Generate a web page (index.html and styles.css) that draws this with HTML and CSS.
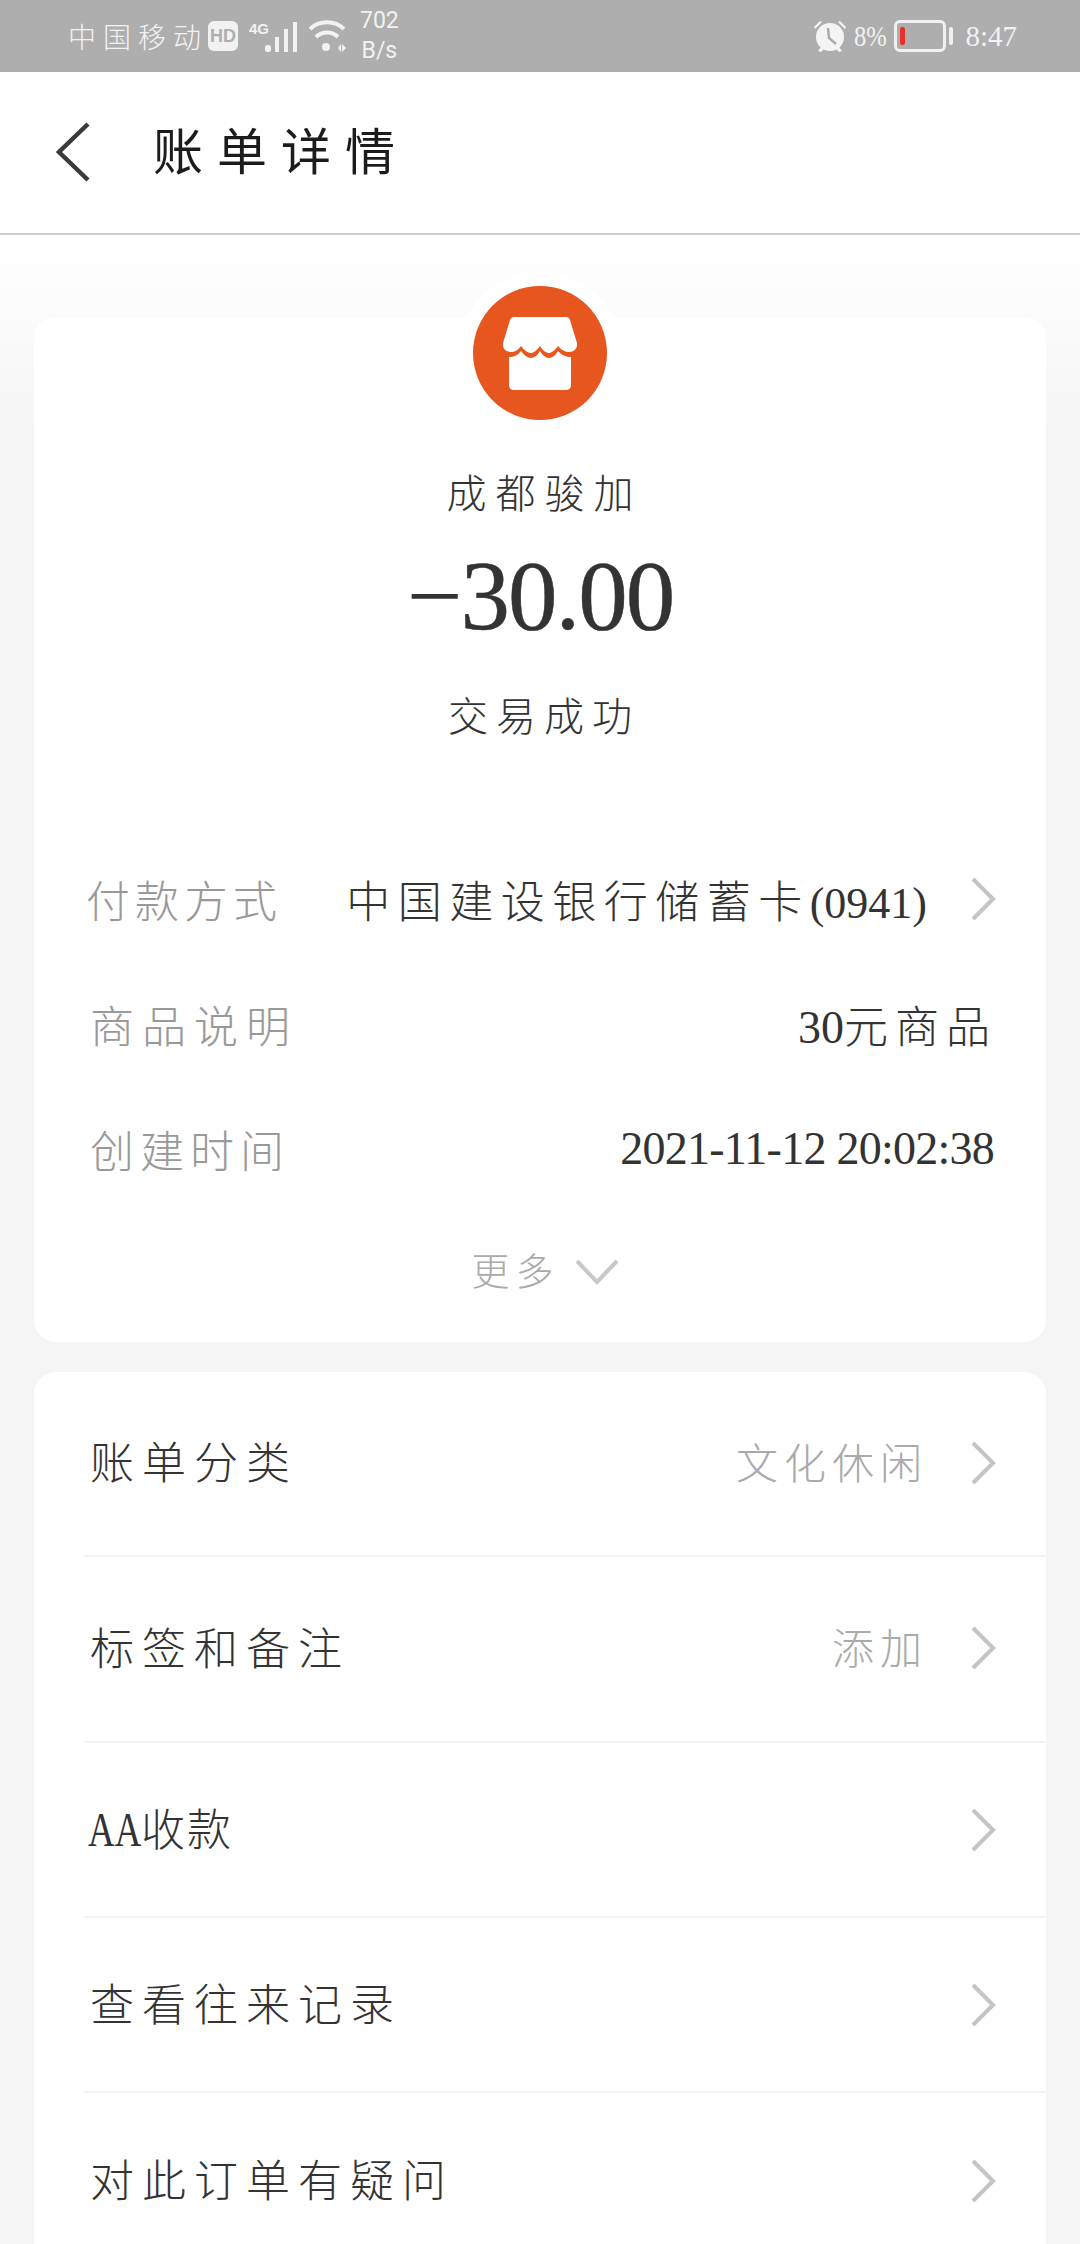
FILE: index.html
```html
<!DOCTYPE html>
<html lang="zh-CN">
<head>
<meta charset="utf-8">
<title>账单详情</title>
<link rel="stylesheet" href="styles.css">
</head>
<body>
<div class="status">
  <div class="status-left">
    <span class="carrier">中国移动</span>
    <span class="hd">HD</span>
    <span class="net">
      <span class="four-g">4G</span>
      <svg class="bars" width="33" height="32" viewBox="0 0 33 32"><g fill="#f2f2f2"><rect x="0" y="24" width="6" height="7" rx="2.5"/><rect x="10" y="16" width="4" height="15"/><rect x="19" y="8" width="4" height="23"/><rect x="28" y="1" width="4" height="30"/></g></svg>
    </span>
    <svg class="wifi" width="38" height="34" viewBox="0 0 38 34"><g fill="none" stroke="#f2f2f2" stroke-width="4"><path d="M2 10C11 1 27 1 36 10"/><path d="M8 18C14 12 24 12 30 18"/></g><circle cx="18" cy="28" r="4" fill="#f2f2f2"/><path d="M30 29l3-4v8zM34 25l4 4-4 4z" fill="#f2f2f2"/></svg>
    <span class="speed"><span>702</span><span>B/s</span></span>
  </div>
  <div class="status-right">
    <svg class="alarm" width="34" height="34" viewBox="0 0 34 34"><g fill="#f4f4f4"><circle cx="17" cy="18" r="14"/><path d="M1 8l6-6 2 1-7 7zM33 8l-6-6-2 1 7 7z"/><path d="M5 32l3-4 3 2-3 3zM29 32l-3-4-3 2 3 3z"/></g><path d="M15 9l1 10 7 6" fill="none" stroke="#aaa" stroke-width="2.5"/></svg>
    <span class="pct">8%</span>
    <span class="battery"><span class="level"></span></span>
    <span class="nub"></span>
    <span class="clock">8:47</span>
  </div>
</div>

<header class="topbar">
  <svg class="back" width="36" height="60" viewBox="0 0 36 60"><path d="M33 2L4 30l29 28" fill="none" stroke="#3a3a3a" stroke-width="4.5"/></svg>
  <h1 class="title">账单详情</h1>
</header>

<main class="content">
  <section class="card summary">
    <div class="avatar-ring">
      <div class="avatar">
        <svg width="74" height="73" viewBox="0 0 74 73"><path fill="#fff" d="M11 0H63Q66 0 67 3L74 26Q75 34 66 35Q60 35 55 29Q50 36 46 36Q41 36 37 29Q32 36 28 36Q23 36 18 29Q14 35 8 35Q-1 34 0 26L7 3Q8 0 11 0Z"/><path fill="#fff" d="M6 40Q14 40 18 34Q23 41 28 41Q33 41 37 34Q41 41 46 41Q51 41 55 34Q60 40 68 40V68Q68 73 63 73H11Q6 73 6 68Z"/></svg>
      </div>
    </div>
    <div class="merchant">成都骏加</div>
    <div class="amount"><span class="minus">−</span>30.00</div>
    <div class="state">交易成功</div>
    <div class="details">
      <div class="detail">
        <span class="label wide">付款方式</span>
        <span class="value pay">中国建设银行储蓄卡<span class="num">(0941)</span></span>
        <svg class="chev" width="26" height="44" viewBox="0 0 26 44"><path d="M3 2l20 20L3 42" fill="none" stroke="#c4c4c4" stroke-width="4"/></svg>
      </div>
      <div class="detail">
        <span class="label mid">商品说明</span>
        <span class="value desc"><span class="num">30</span>元商品</span>
      </div>
      <div class="detail">
        <span class="label">创建时间</span>
        <span class="value num date">2021-11-12 20:02:38</span>
      </div>
    </div>
    <div class="more">
      <span>更多</span>
      <svg width="44" height="28" viewBox="0 0 44 28"><path d="M2 3l20 21L42 3" fill="none" stroke="#c8c8c8" stroke-width="4"/></svg>
    </div>
  </section>

  <section class="card list">
    <div class="row first">
      <span class="row-name">账单分类</span>
      <span class="row-value">文化休闲</span>
      <svg class="chev" width="26" height="44" viewBox="0 0 26 44"><path d="M3 2l20 20L3 42" fill="none" stroke="#c4c4c4" stroke-width="4"/></svg>
    </div>
    <div class="row second">
      <span class="row-name">标签和备注</span>
      <span class="row-value">添加</span>
      <svg class="chev" width="26" height="44" viewBox="0 0 26 44"><path d="M3 2l20 20L3 42" fill="none" stroke="#c4c4c4" stroke-width="4"/></svg>
    </div>
    <div class="row">
      <span class="row-name aa"><span class="aa-mark">AA</span>收款</span>
      <svg class="chev" width="26" height="44" viewBox="0 0 26 44"><path d="M3 2l20 20L3 42" fill="none" stroke="#c4c4c4" stroke-width="4"/></svg>
    </div>
    <div class="row">
      <span class="row-name">查看往来记录</span>
      <svg class="chev" width="26" height="44" viewBox="0 0 26 44"><path d="M3 2l20 20L3 42" fill="none" stroke="#c4c4c4" stroke-width="4"/></svg>
    </div>
    <div class="row">
      <span class="row-name">对此订单有疑问</span>
      <svg class="chev" width="26" height="44" viewBox="0 0 26 44"><path d="M3 2l20 20L3 42" fill="none" stroke="#c4c4c4" stroke-width="4"/></svg>
    </div>
  </section>
</main>
</body>
</html>
```
FILE: styles.css
```css
* { box-sizing: border-box; }
html, body { margin: 0; padding: 0; }
body {
  width: 1080px;
  height: 2244px;
  overflow: hidden;
  background: #f5f5f5;
  font-family: "Noto Sans CJK SC", "Noto Sans CJK JP", sans-serif;
  font-weight: 300;
  color: #333;
}
.status {
  height: 72px;
  background: #aeaeae;
  color: #f2f2f2;
  display: flex;
  align-items: center;
  justify-content: space-between;
  padding: 0 63px 0 68px;
}
.status-left, .status-right { display: flex; align-items: center; }
.carrier { font-size: 28px; letter-spacing: 7px; line-height: 36px; }
.hd {
  width: 30px; height: 30px;
  background: #f2f2f2; color: #aeaeae;
  border-radius: 6px;
  font: 700 18px/30px "Liberation Sans", sans-serif;
  text-align: center;
}
.net { display: block; margin-left: 11px; position: relative; width: 49px; height: 36px; }
.four-g { font: 700 15px/14px "Liberation Sans", sans-serif; position: absolute; left: 0; top: 4px; }
.bars { position: absolute; left: 16px; top: 3px; }
.wifi { margin-left: 10px; }
.speed {
  display: flex; flex-direction: column; align-items: center;
  margin-left: 14px;
  font: 400 23px/30px Roboto, sans-serif;
}
.alarm { margin-right: 7px; }
.pct, .clock { font-family: "Liberation Serif", serif; }
.pct {
  font-size: 30px;
  width: 32px;
  margin-right: 8px;
  display: inline-block;
  transform: scaleX(.82);
  transform-origin: left center;
  white-space: nowrap;
}
.battery {
  width: 52px; height: 32px;
  border: 3px solid #f0f0f0; border-radius: 6px;
  padding: 4px 3px;
  display: flex;
}
.level { width: 5px; background: #e8302a; border-radius: 2px; }
.nub { width: 4px; height: 18px; background: #f0f0f0; border-radius: 2px; margin-left: 3px; }
.clock { margin-left: 12px; font-size: 29px; }

.topbar {
  height: 163px;
  background: #fff;
  border-bottom: 2px solid #cfcfcf;
  display: flex;
  align-items: center;
  padding: 0 0 2px 55px;
}
.back { flex: none; }
.title {
  margin: 0 0 8px 62px;
  font-size: 50px;
  font-weight: 400;
  letter-spacing: 14px;
  color: #1c1c1c;
  line-height: 70px;
}
.content {
  background: linear-gradient(#ffffff 0, #f5f5f5 200px);
  padding: 82px 34px 0;
  height: 2009px;
}
.card { background: #fff; border-radius: 22px; }
.summary {
  height: 1025px;
  position: relative;
  padding-top: 146px;
  text-align: center;
}
.avatar-ring {
  position: absolute;
  left: 50%; top: -45px;
  margin-left: -81px;
  width: 162px; height: 162px;
  border-radius: 50%;
  background: #fff;
  display: flex; align-items: center; justify-content: center;
}
.avatar {
  width: 134px; height: 134px; border-radius: 50%;
  background: #e6561e;
  display: flex; align-items: center; justify-content: center;
}
.merchant { font-size: 40px; letter-spacing: 9px; text-indent: 9px; line-height: 56px; color: #333; }
.amount {
  font-family: "Liberation Serif", serif;
  font-size: 99px; line-height: 100px;
  letter-spacing: -2px;
  margin-top: 27px;
  color: #333;
  font-weight: 400;
  -webkit-text-stroke: 0.5px #333;
}
.minus { letter-spacing: -2px; -webkit-text-stroke: 0; }
.state { font-size: 40px; letter-spacing: 8px; text-indent: 8px; line-height: 56px; margin-top: 40px; color: #333; }
.details { margin-top: 94px; padding: 0 52px 0 54px; }
.detail { display: flex; align-items: center; justify-content: space-between; height: 125px; }
.label { font-size: 44px; letter-spacing: 6px; color: #999; padding-left: 2px; white-space: nowrap; }
.label.wide { letter-spacing: 5px; padding-left: 0; margin-left: -2px; }
.label.mid { letter-spacing: 8px; }
.value { font-size: 44px; letter-spacing: 7px; color: #333; white-space: nowrap; }
.value.pay { margin-left: auto; letter-spacing: 7.5px; margin-right: 43px; }
.value.desc { margin-right: -3px; }
.num { font-family: "Liberation Serif", serif; letter-spacing: 0; font-size: 46px; }
.pay .num { font-size: 44px; }
.value.date { letter-spacing: -0.75px; }
.chev { flex: none; }
.detail .chev { margin-right: -2px; }
.more {
  display: flex; align-items: center; justify-content: center;
  margin-top: 30px;
  padding-left: 10px;
  color: #aaa;
  font-size: 38px;
  letter-spacing: 6px;
}
.more svg { margin-left: 15px; margin-top: 6px; }
.list {
  margin-top: 30px;
  padding-left: 50px;
}
.row {
  display: flex; align-items: center;
  height: 175px;
  border-bottom: 2px solid #f3f3f3;
  padding-right: 50px;
  padding-left: 6px;
}
.row.first { height: 185px; padding-bottom: 2px; }
.row.second { height: 186px; padding-bottom: 2px; }
.row:last-child { border-bottom: 0; }
.row-name { font-size: 44px; letter-spacing: 8px; color: #333; flex: 1; white-space: nowrap; margin-bottom: 5px; }
.row-value { font-size: 42px; letter-spacing: 6px; color: #aaa; margin-right: 42px; white-space: nowrap; margin-bottom: 5px; }
.aa { letter-spacing: 2px; }
.aa-mark {
  display: inline-block;
  width: 53px;
  font-family: "Liberation Serif", serif;
  font-size: 48px;
  letter-spacing: 0;
  transform: scaleX(.77);
  transform-origin: left center;
  margin-left: -2px;
}
```
